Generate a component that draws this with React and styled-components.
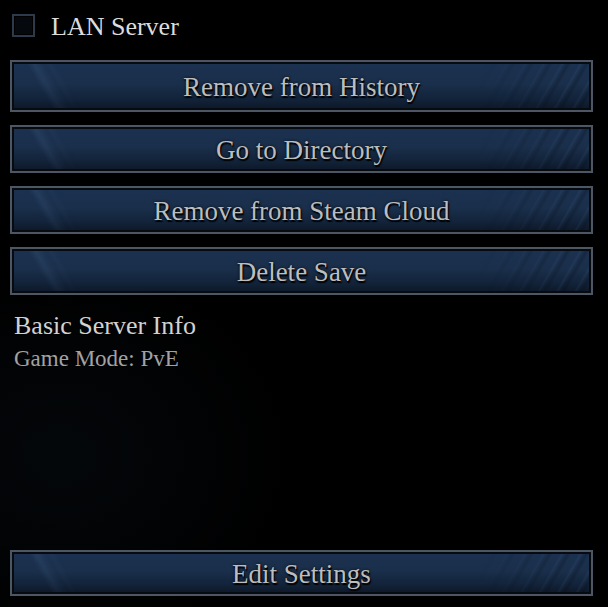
import React from "react";
import styled, { createGlobalStyle } from "styled-components";

const Global = createGlobalStyle`
  html, body { margin: 0; padding: 0; background: #000; }
  body { font-family: "Liberation Serif", "DejaVu Serif", serif; }
  * { box-sizing: border-box; }
`;

const Page = styled.div`
  height: 607px;
  width: 608px;
  display: flex;
  flex-direction: column;
  padding: 14px 15px 11px 10px;
  background: radial-gradient(ellipse at 10% 75%, #04070a 0%, #000 30%),
    radial-gradient(ellipse at 85% 85%, #030508 0%, #000 25%), #000;
`;

const CheckRow = styled.label`
  display: flex;
  align-items: center;
  gap: 16px;
  padding-left: 2px;
  height: 23px;
  margin-bottom: 23px;
`;

const Box = styled.span`
  width: 23px;
  height: 23px;
  border: 2px solid #2d3a4b;
  background: #05080c;
  box-shadow: inset 0 0 0 1px #000;
`;

const CheckLabel = styled.span`
  color: #dcdcdc;
  font-size: 26px;
  line-height: 1;
  padding-top: 2px;
`;

const ButtonList = styled.div`
  display: flex;
  flex-direction: column;
  gap: 13px;
`;

const Button = styled.div`
  position: relative;
  height: ${(p) => p.$h || 48}px;
  border: 2px solid #4d5763;
  box-shadow: inset 0 0 0 2px #070b10;
  background: linear-gradient(180deg, #1b3150 0%, #1a2f4b 45%, #13243b 75%, #0d1727 100%);
  display: flex;
  align-items: center;
  justify-content: center;
  overflow: hidden;
  &::before, &::after {
    content: "";
    position: absolute;
    top: 2px;
    bottom: 2px;
    pointer-events: none;
  }
  &::before {
    left: 2px;
    width: 70px;
    background:
      linear-gradient(60deg, transparent 0%, transparent 40%, rgba(130,170,220,0.11) 48%, transparent 60%),
      linear-gradient(60deg, transparent 0%, transparent 58%, rgba(130,170,220,0.06) 64%, transparent 72%);
    -webkit-mask-image: linear-gradient(90deg, #000 30%, transparent 100%);
    mask-image: linear-gradient(90deg, #000 30%, transparent 100%);
  }
  &::after {
    right: 2px;
    width: 110px;
    background: repeating-linear-gradient(120deg, transparent 0px, transparent 6px, rgba(130,170,220,0.07) 8px, transparent 10px, rgba(0,0,0,0.18) 13px, transparent 16px);
    -webkit-mask-image: linear-gradient(270deg, #000 20%, transparent 100%);
    mask-image: linear-gradient(270deg, #000 20%, transparent 100%);
  }
`;

const ButtonText = styled.span`
  position: relative;
  z-index: 1;
  color: #bcbdbe;
  font-size: 27px;
  line-height: 1;
  padding-top: 2px;
  text-shadow: 1px 2px 1px #000, 0 0 3px rgba(0,0,0,0.8);
`;

const Info = styled.div`
  margin-top: 18px;
  padding-left: 4px;
  display: flex;
  flex-direction: column;
  gap: 8px;
`;

const InfoTitle = styled.div`
  color: #d2d2d2;
  font-size: 26px;
  line-height: 26px;
`;

const InfoLine = styled.div`
  color: #a2a2a2;
  font-size: 23px;
  line-height: 24px;
`;

const Spacer = styled.div`
  flex: 1;
`;

const buttons = [
  { label: "Remove from History", h: 52 },
  { label: "Go to Directory" },
  { label: "Remove from Steam Cloud" },
  { label: "Delete Save" },
];

export default function App() {
  return (
    <>
      <Global />
      <Page>
        <CheckRow>
          <Box />
          <CheckLabel>LAN Server</CheckLabel>
        </CheckRow>
        <ButtonList>
          {buttons.map((b) => (
            <Button key={b.label} $h={b.h}>
              <ButtonText>{b.label}</ButtonText>
            </Button>
          ))}
        </ButtonList>
        <Info>
          <InfoTitle>Basic Server Info</InfoTitle>
          <InfoLine>Game Mode: PvE</InfoLine>
        </Info>
        <Spacer />
        <Button $h={46}>
          <ButtonText>Edit Settings</ButtonText>
        </Button>
      </Page>
    </>
  );
}
